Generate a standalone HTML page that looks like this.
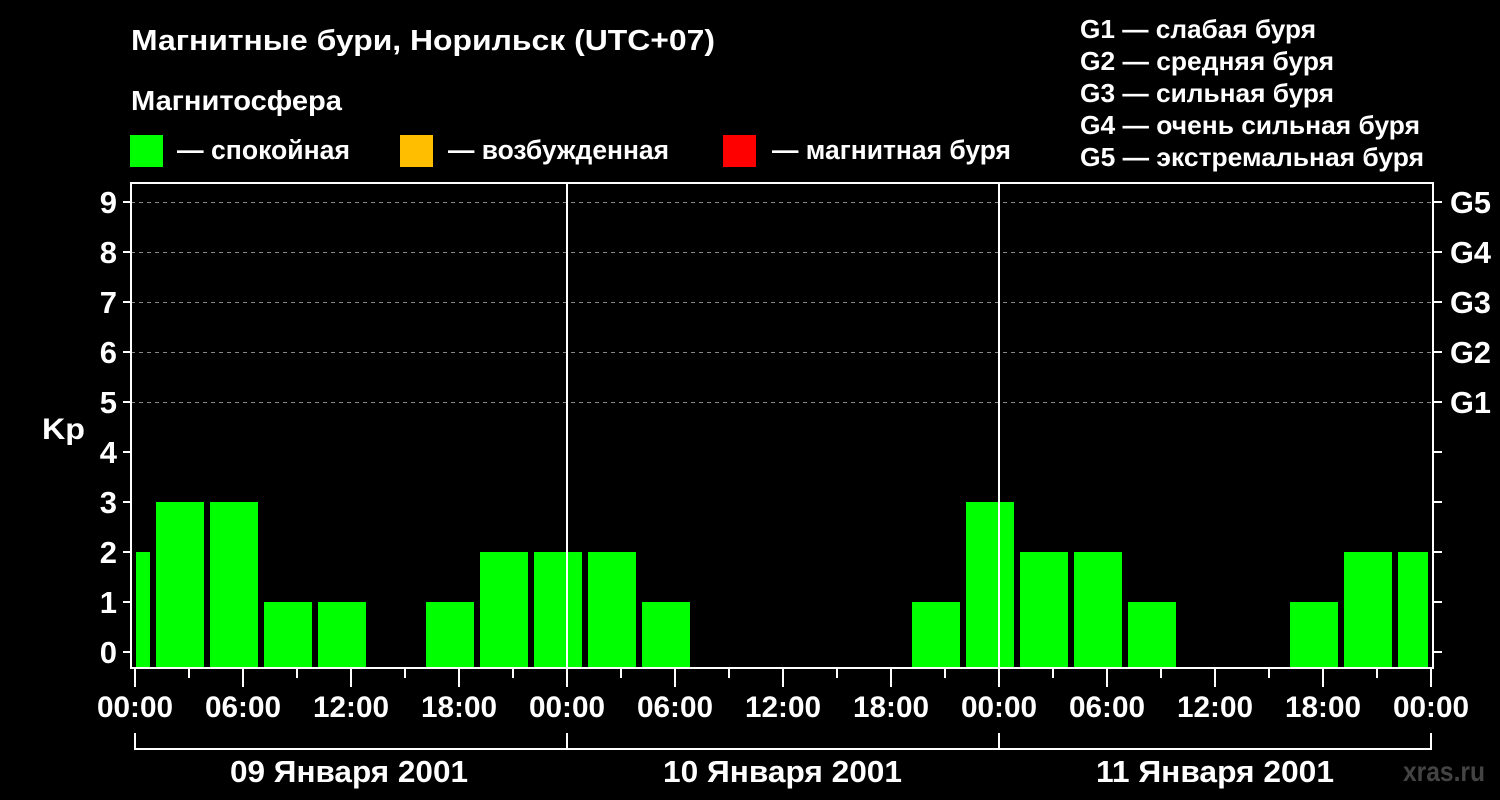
<!DOCTYPE html>
<html><head><meta charset="utf-8"><style>
html,body{margin:0;padding:0;background:#000;}
svg{display:block;}
text{font-family:"Liberation Sans",Arial,sans-serif;font-weight:bold;fill:#fff;}
</style></head><body>
<svg width="1500" height="800" viewBox="0 0 1500 800" xmlns="http://www.w3.org/2000/svg">
<rect width="1500" height="800" fill="#000"/>
<text x="131" y="50" font-size="29" textLength="584" lengthAdjust="spacingAndGlyphs">Магнитные бури, Норильск (UTC+07)</text>
<text x="131" y="110" font-size="28" textLength="211" lengthAdjust="spacingAndGlyphs">Магнитосфера</text>
<rect x="130" y="135" width="33" height="32" fill="#00ff00"/>
<text x="177" y="159" font-size="27" textLength="173" lengthAdjust="spacingAndGlyphs">— спокойная</text>
<rect x="400" y="135" width="33" height="32" fill="#ffbf00"/>
<text x="448" y="159" font-size="27" textLength="221" lengthAdjust="spacingAndGlyphs">— возбужденная</text>
<rect x="723" y="135" width="33" height="32" fill="#ff0000"/>
<text x="772" y="159" font-size="27" textLength="239" lengthAdjust="spacingAndGlyphs">— магнитная буря</text>
<g font-size="26">
<text x="1080" y="38" textLength="236" lengthAdjust="spacingAndGlyphs">G1 — слабая буря</text>
<text x="1080" y="70" textLength="254" lengthAdjust="spacingAndGlyphs">G2 — средняя буря</text>
<text x="1080" y="102" textLength="254" lengthAdjust="spacingAndGlyphs">G3 — сильная буря</text>
<text x="1080" y="134" textLength="340" lengthAdjust="spacingAndGlyphs">G4 — очень сильная буря</text>
<text x="1080" y="166" textLength="344" lengthAdjust="spacingAndGlyphs">G5 — экстремальная буря</text>
</g>
<g stroke="#888" stroke-width="1" stroke-dasharray="4,4">
<line x1="131" y1="202.5" x2="1433" y2="202.5"/>
<line x1="131" y1="252.5" x2="1433" y2="252.5"/>
<line x1="131" y1="302.5" x2="1433" y2="302.5"/>
<line x1="131" y1="352.5" x2="1433" y2="352.5"/>
<line x1="131" y1="402.5" x2="1433" y2="402.5"/>
</g>
<g fill="#00ff00">
<rect x="136" y="552" width="14" height="116"/>
<rect x="156" y="502" width="48" height="166"/>
<rect x="210" y="502" width="48" height="166"/>
<rect x="264" y="602" width="48" height="66"/>
<rect x="318" y="602" width="48" height="66"/>
<rect x="426" y="602" width="48" height="66"/>
<rect x="480" y="552" width="48" height="116"/>
<rect x="534" y="552" width="48" height="116"/>
<rect x="588" y="552" width="48" height="116"/>
<rect x="642" y="602" width="48" height="66"/>
<rect x="912" y="602" width="48" height="66"/>
<rect x="966" y="502" width="48" height="166"/>
<rect x="1020" y="552" width="48" height="116"/>
<rect x="1074" y="552" width="48" height="116"/>
<rect x="1128" y="602" width="48" height="66"/>
<rect x="1290" y="602" width="48" height="66"/>
<rect x="1344" y="552" width="48" height="116"/>
<rect x="1398" y="552" width="30" height="116"/>
</g>
<g stroke="#fff" stroke-width="2" fill="none">
<rect x="131" y="183" width="1302" height="485"/>
<line x1="567" y1="183" x2="567" y2="668"/>
<line x1="999" y1="183" x2="999" y2="668"/>
<path d="M123 652H131M123 602H131M123 552H131M123 502H131M123 452H131M123 402H131M123 352H131M123 302H131M123 252H131M123 202H131"/>
<path d="M1433 652H1442M1433 602H1442M1433 552H1442M1433 502H1442M1433 452H1442M1433 402H1442M1433 352H1442M1433 302H1442M1433 252H1442M1433 202H1442"/>
<path d="M135 668V687M243 668V687M351 668V687M459 668V687M567 668V687M675 668V687M783 668V687M891 668V687M999 668V687M1107 668V687M1215 668V687M1323 668V687M1431 668V687"/>
<path d="M189 668V678M297 668V678M405 668V678M513 668V678M621 668V678M729 668V678M837 668V678M945 668V678M1053 668V678M1161 668V678M1269 668V678M1377 668V678"/>
<path d="M135 733V749H1431V733M567 733V749M999 733V749"/>
</g>
<g font-size="31" text-anchor="end">
<text x="117" y="663">0</text><text x="117" y="613">1</text><text x="117" y="563">2</text>
<text x="117" y="513">3</text><text x="117" y="463">4</text><text x="117" y="413">5</text>
<text x="117" y="363">6</text><text x="117" y="313">7</text><text x="117" y="263">8</text>
<text x="117" y="213">9</text>
</g>
<text x="42" y="439" font-size="30" textLength="43" lengthAdjust="spacingAndGlyphs">Kp</text>
<g font-size="31">
<text x="1450" y="213" textLength="41" lengthAdjust="spacingAndGlyphs">G5</text><text x="1450" y="263" textLength="41" lengthAdjust="spacingAndGlyphs">G4</text><text x="1450" y="313" textLength="41" lengthAdjust="spacingAndGlyphs">G3</text>
<text x="1450" y="363" textLength="41" lengthAdjust="spacingAndGlyphs">G2</text><text x="1450" y="413" textLength="41" lengthAdjust="spacingAndGlyphs">G1</text>
</g>
<g font-size="30">
<text x="97" y="717" textLength="76" lengthAdjust="spacingAndGlyphs">00:00</text>
<text x="205" y="717" textLength="76" lengthAdjust="spacingAndGlyphs">06:00</text>
<text x="313" y="717" textLength="76" lengthAdjust="spacingAndGlyphs">12:00</text>
<text x="421" y="717" textLength="76" lengthAdjust="spacingAndGlyphs">18:00</text>
<text x="529" y="717" textLength="76" lengthAdjust="spacingAndGlyphs">00:00</text>
<text x="637" y="717" textLength="76" lengthAdjust="spacingAndGlyphs">06:00</text>
<text x="745" y="717" textLength="76" lengthAdjust="spacingAndGlyphs">12:00</text>
<text x="853" y="717" textLength="76" lengthAdjust="spacingAndGlyphs">18:00</text>
<text x="961" y="717" textLength="76" lengthAdjust="spacingAndGlyphs">00:00</text>
<text x="1069" y="717" textLength="76" lengthAdjust="spacingAndGlyphs">06:00</text>
<text x="1177" y="717" textLength="76" lengthAdjust="spacingAndGlyphs">12:00</text>
<text x="1285" y="717" textLength="76" lengthAdjust="spacingAndGlyphs">18:00</text>
<text x="1393" y="717" textLength="76" lengthAdjust="spacingAndGlyphs">00:00</text>
</g>
<g font-size="31">
<text x="230" y="782" textLength="238" lengthAdjust="spacingAndGlyphs">09 Января 2001</text>
<text x="663" y="782" textLength="239" lengthAdjust="spacingAndGlyphs">10 Января 2001</text>
<text x="1096" y="782" textLength="238" lengthAdjust="spacingAndGlyphs">11 Января 2001</text>
</g>
<text x="1403" y="781" font-size="28" textLength="82" lengthAdjust="spacingAndGlyphs" style="fill:#444">xras.ru</text>
</svg>
</body></html>
